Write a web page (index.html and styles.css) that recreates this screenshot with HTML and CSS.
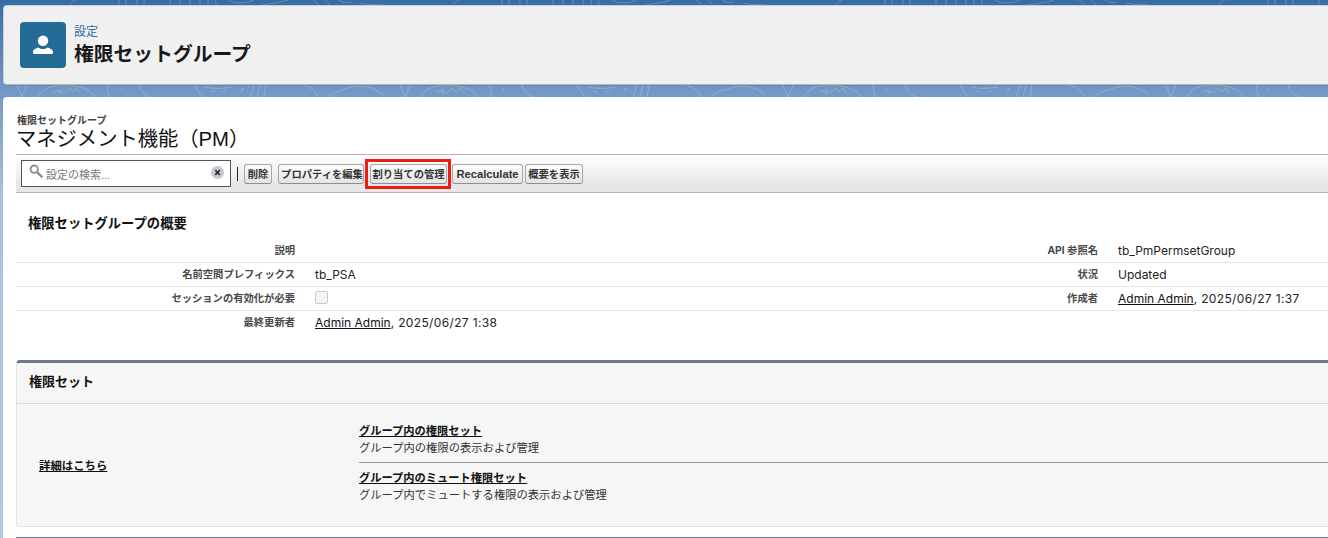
FILE: index.html
```html
<!DOCTYPE html>
<html lang="ja">
<head>
<meta charset="utf-8">
<title>権限セットグループ</title>
<link rel="stylesheet" href="styles.css">
</head>
<body>
<svg class="bg-art" width="1328" height="538" viewBox="0 0 1328 538" fill="none" aria-hidden="true">
  <defs>
    <pattern id="swirl" patternUnits="userSpaceOnUse" width="383" height="100">
      <g stroke="#ffffff" stroke-opacity=".2">
        <path d="M17 85l5 12M27 85l-5 12M38 97c3-8 14-12 24-12s28 2 33 12M53 92l8-2-2 3 6-1M65 92l5-4 3 4 4-4 3 5M107 85l2 12M120 88v3M139 85c1 6 6 10 12 12"/>
        <path d="M194 85l8 12M206 87c6 2 14 2 26 0M210 91l5 1M222 92l4-1M240 92l3-4v3M250 97l4-12M257 97l3-12M264 97l2-12M303 85c8 2 13 6 15 12M328 97c6-6 12-6 20-9s24-4 37 9"/>
        <path d="M70 5c1-2 3-4 6-5M119 5V0M126 5V0M137 5V0M144 5V0M170 5V0M180 5V0M190 5V0M200 5V0M208 5V0M216 5c0-2 0-4-1-5M229 0c5 4 16 4 25 0M262 5c6-1 16-2 26-5M313 0l6 5M325 0l5 5M339 0c4 3 8 3 12 2M360 3c8 2 18 2 30 2"/>
      </g>
    </pattern>
  </defs>
  <rect width="1328" height="100" fill="url(#swirl)"/>
</svg>
<header class="page-head">
  <span class="head-icon">
    <svg width="30" height="30" viewBox="0 0 30 30"><circle cx="15" cy="10.800" r="5.200" fill="#fff"/><path d="M5 22.500c0-3 2.400-4.200 5.600-5 1 1 2.700 1.600 4.400 1.600s3.400-.6 4.400-1.600c3.200.8 5.600 2 5.600 5v.3c0 .8-.6 1.200-1.400 1.200H6.400c-.8 0-1.400-.4-1.400-1.200z" fill="#fff"/></svg>
  </span>
  <div class="head-text">
    <div class="crumb">設定</div>
    <h1 class="head-title">権限セットグループ</h1>
  </div>
</header>
<main class="content">
  <div class="title-block">
    <div class="eyebrow">権限セットグループ</div>
    <h2 class="record-title">マネジメント機能（PM）</h2>
  </div>
  <div class="toolbar">
    <div class="search">
      <svg class="search-icon" width="14" height="14" viewBox="0 0 14 14" fill="none" stroke="#8c8c8c"><circle cx="5.200" cy="5.200" r="3.700" stroke-width="1.800"/><path d="M8 8l4.600 4.600" stroke-width="2.400" stroke-linecap="round"/></svg>
      <span class="search-text">設定の検索...</span>
      <span class="search-clear"><svg width="13" height="13" viewBox="0 0 13 13"><circle cx="6.500" cy="6.500" r="6.500" fill="#c6cad0"/><path d="M4.200 4.200l4.600 4.600M8.800 4.200l-4.600 4.600" stroke="#333" stroke-width="1.800"/></svg></span>
    </div>
    <span class="divider"></span>
    <span class="btn btn-delete">削除</span>
    <span class="btn btn-edit">プロパティを編集</span>
    <span class="highlight"><span class="btn btn-manage">割り当ての管理</span></span>
    <span class="btn btn-recalc">Recalculate</span>
    <span class="btn btn-view">概要を表示</span>
  </div>
  <h3 class="summary-title">権限セットグループの概要</h3>
  <div class="details">
    <div class="row">
      <div class="label">説明</div><div class="value"></div>
      <div class="label">API 参照名</div><div class="value">tb_PmPermsetGroup</div>
    </div>
    <div class="row">
      <div class="label">名前空間プレフィックス</div><div class="value">tb_PSA</div>
      <div class="label">状況</div><div class="value">Updated</div>
    </div>
    <div class="row">
      <div class="label">セッションの有効化が必要</div><div class="value"><span class="checkbox"></span></div>
      <div class="label">作成者</div><div class="value"><a class="link" href="#">Admin Admin</a><span class="stamp">, 2025/06/27 1:37</span></div>
    </div>
    <div class="row row-last">
      <div class="label">最終更新者</div><div class="value"><a class="link" href="#">Admin Admin</a><span class="stamp">, 2025/06/27 1:38</span></div>
      <div class="label"></div><div class="value"></div>
    </div>
  </div>
  <section class="panel">
    <div class="panel-head">権限セット</div>
    <div class="panel-body">
      <div class="learn"><a class="link strong" href="#">詳細はこちら</a></div>
      <div class="links">
        <div class="link-item">
          <a class="link strong" href="#">グループ内の権限セット</a>
          <p class="desc">グループ内の権限の表示および管理</p>
        </div>
        <div class="link-item">
          <a class="link strong" href="#">グループ内のミュート権限セット</a>
          <p class="desc">グループ内でミュートする権限の表示および管理</p>
        </div>
      </div>
    </div>
  </section>
  <div class="next-panel"></div>
</main>
</body>
</html>
```
FILE: styles.css
```css
* { box-sizing: border-box; }
html, body { height: 538px; overflow: hidden; }
body {
  margin: 0;
  padding: 5px 0 0 3px;
  position: relative;
  background: linear-gradient(180deg, #366da6 0, #7299c4 92px, #a9c2e1 200px, #b0c8e6 538px);
  font-family: "Liberation Sans", "Noto Sans CJK JP", sans-serif;
  color: #181818;
}
.bg-art { position: absolute; left: 0; top: 0; }
.page-head {
  position: relative;
  display: flex;
  align-items: center;
  gap: 8px;
  height: 80px;
  margin-right: -10px;
  padding: 0 0 0 16px;
  background: #f0f0f0;
  border: 1px solid #cfcfcf;
  border-bottom: 1px solid #b5b5b5;
  border-radius: 4px;
  box-shadow: 0 1px 1px rgba(0,0,0,.08);
}
.head-icon {
  display: flex;
  align-items: center;
  justify-content: center;
  width: 46px;
  height: 46px;
  border-radius: 4px;
  background: #246b97;
}
.head-text { display: flex; flex-direction: column; gap: 1px; }
.crumb { font-size: 12px; line-height: 16px; color: #2f6ea5; }
.head-title { margin: 0; font-size: 19.800px; line-height: 26px; font-weight: 700; color: #181818; }
.content {
  position: relative;
  height: 441px;
  margin-top: 12px;
  margin-right: -10px;
  padding: 0 0 0 13px;
  background: #fff;
  border-radius: 4px 4px 0 0;
  overflow: hidden;
}
.title-block { padding-top: 17px; height: 57px; }
.eyebrow { margin-left: 1px; font-size: 10px; line-height: 13px; font-weight: 700; color: #444; }
.record-title { margin: 0; font-size: 20.300px; line-height: 26px; font-weight: 400; color: #111; margin-top: -1px; }
.toolbar {
  display: flex;
  align-items: center;
  height: 39px;
  padding-left: 5px;
  border-top: 1px solid #b4b4b4;
  border-bottom: 1px solid #b4b4b4;
  background: linear-gradient(180deg, #fff 0, #f0f0f0 50%, #e7e7e7 75%, #e7e7e7 100%);
}
.search {
  display: flex;
  align-items: center;
  width: 210px;
  height: 27px;
  padding: 0 6px 0 7px;
  background: #fff;
  border: 1px solid #555;
}
.search-icon { margin-top: -5px; flex: none; }
.search-text { flex: 1; margin-left: 3px; font-size: 11px; color: #777; }
.search-clear { display: flex; margin-top: -2px; }
.divider { width: 1px; height: 14px; margin: 0 6px 0 6px; background: #222; }
.btn {
  display: flex;
  align-items: center;
  justify-content: center;
  height: 20px;
  border: 1px solid #a6a6a6;
  border-bottom-color: #8e8e8e;
  border-radius: 3px;
  background: linear-gradient(180deg, #fdfdfd, #e4e4e4);
  font-size: 10.300px;
  font-weight: 700;
  color: #333;
  white-space: nowrap;
}
.btn-delete { width: 28px; margin-right: 6px; }
.btn-edit { width: 86px; margin-right: 1px; padding-left: 2px; }
.highlight { display: flex; align-items: center; height: 30px; padding: 0 1px 0 2px; border: 3px solid #f01b12; }
.btn-manage { width: 77px; }
.btn-recalc { width: 71px; margin-left: 1px; font-size: 11.200px; }
.btn-view { width: 58px; margin-left: 2px; }
.summary-title { margin: 22px 0 0 12px; font-size: 13.300px; line-height: 18px; font-weight: 700; color: #111; }
.details { margin-top: 6px; }
.row {
  display: grid;
  grid-template-columns: 279px 741px 62px 1fr;
  height: 24px;
  border-bottom: 1px solid #e6e6e6;
}
.row-last { border-bottom: 0; }
.label { padding-top: 4px; font-family: Inter, "Liberation Sans", "Noto Sans CJK JP", sans-serif; font-size: 10.300px; line-height: 14px; font-weight: 700; color: #4a4a4a; text-align: right; white-space: nowrap; }
.value { padding: 4px 0 0 20px; font-family: Inter, "Liberation Sans", "Noto Sans CJK JP", sans-serif; font-size: 12px; line-height: 16px; color: #222; white-space: nowrap; }
.stamp { letter-spacing: .35px; }
.checkbox { display: block; width: 13px; height: 13px; background: #f4f4f4; border: 1px solid #c9c9c9; border-radius: 2px; }
.link { color: #111; text-decoration: underline; }
.strong { font-weight: 700; }
.panel {
  height: 167px;
  margin-top: 25px;
  background: #f6f6f6;
  border: 1px solid #e0e0e0;
  border-top: 3px solid #6b7890;
  border-radius: 4px 0 0 4px;
}
.panel-head {
  height: 41px;
  padding: 10px 0 0 12px;
  font-size: 13px;
  line-height: 18px;
  font-weight: 700;
  color: #111;
  border-bottom: 1px solid #d8d8d8;
}
.panel-body { display: grid; grid-template-columns: 342px 1fr; align-items: center; }
.learn { padding: 14px 0 0 22px; font-size: 11.400px; }
.links { padding-top: 16px; }
.link-item { height: 42px; padding-top: 3px; font-size: 11px; line-height: 16px; }
.link-item + .link-item { border-top: 1px solid #999; height: 50px; padding-top: 7px; }
.link-item .link { font-size: 11.250px; }
.desc { margin: 1px 0 0; font-size: 11.300px; line-height: 16px; color: #333; }
.next-panel { height: 3px; margin-top: 10px; border-top: 1px solid #6b7890; }
```
